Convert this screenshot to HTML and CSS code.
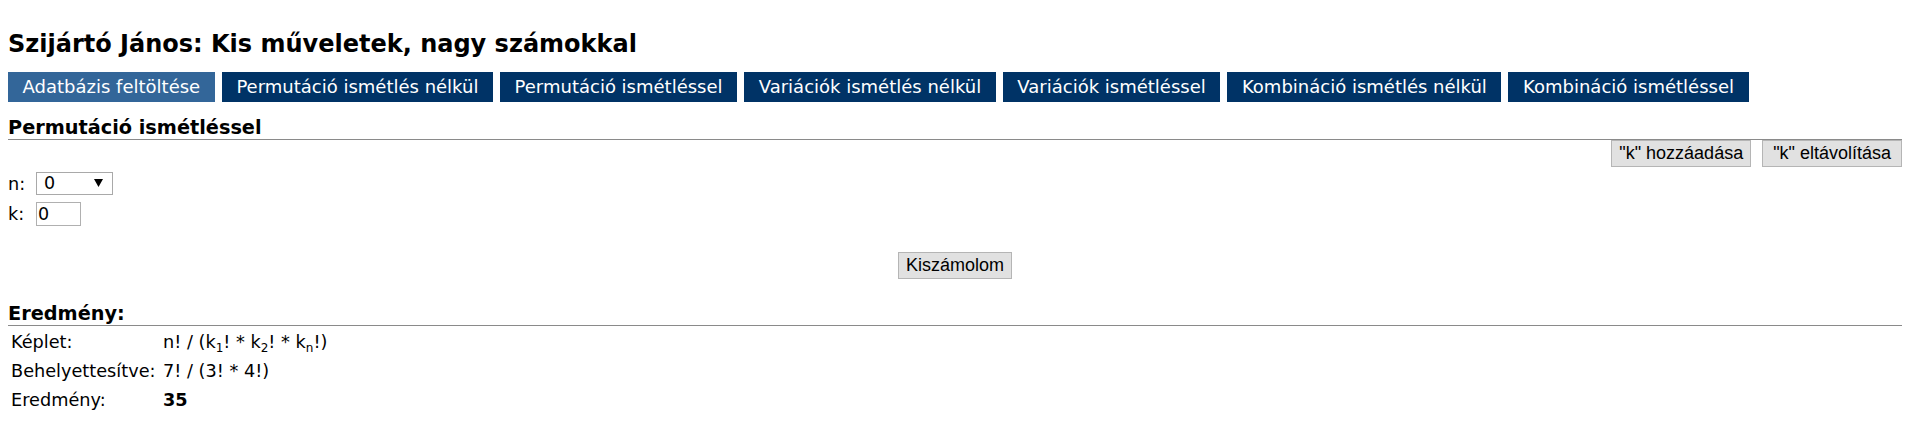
FILE: index.html
```html
<!DOCTYPE html>
<html lang="hu">
<head>
<meta charset="utf-8">
<title>Kis műveletek, nagy számokkal</title>
<link rel="stylesheet" href="styles.css">
</head>
<body>
<div class="page">
  <h1 class="title">Szijártó János: Kis műveletek, nagy számokkal</h1>
  <nav class="tabs">
    <a class="tab tab-active" href="#">Adatbázis feltöltése</a>
    <a class="tab" href="#">Permutáció ismétlés nélkül</a>
    <a class="tab" href="#">Permutáció ismétléssel</a>
    <a class="tab" href="#">Variációk ismétlés nélkül</a>
    <a class="tab" href="#">Variációk ismétléssel</a>
    <a class="tab" href="#">Kombináció ismétlés nélkül</a>
    <a class="tab" href="#">Kombináció ismétléssel</a>
  </nav>
  <h2 class="section">Permutáció ismétléssel</h2>
  <div class="k-actions">
    <button class="btn" type="button">"k" hozzáadása</button>
    <button class="btn btn-wide" type="button">"k" eltávolítása</button>
  </div>
  <div class="field field-n">
    <label class="field-label">n:</label>
    <span class="select-wrap">
      <select class="select"><option>0</option></select>
      <svg class="select-arrow" width="9" height="8" viewBox="0 0 9 8"><polygon points="0,0 9,0 4.5,8" fill="#000"/></svg>
    </span>
  </div>
  <div class="field field-k">
    <label class="field-label">k:</label>
    <input class="input" type="text" value="0">
  </div>
  <div class="calc">
    <button class="btn" type="button">Kiszámolom</button>
  </div>
  <h2 class="section result-title">Eredmény:</h2>
  <table class="result">
    <tr><td class="result-label">Képlet:</td><td>n! / (k<sub>1</sub>! * k<sub>2</sub>! * k<sub>n</sub>!)</td></tr>
    <tr><td class="result-label">Behelyettesítve:</td><td>7! / (3! * 4!)</td></tr>
    <tr><td class="result-label">Eredmény:</td><td><strong>35</strong></td></tr>
  </table>
</div>
</body>
</html>
```

FILE: styles.css
```css
html, body {
  margin: 0;
  padding: 0;
  background: #fff;
}

body {
  font-family: "DejaVu Sans", Verdana, sans-serif;
  font-size: 17.7px;
  color: #000;
}

.page {
  padding: 0 8px 0 8px;
}

.title {
  margin: 30px 0 0 0;
  font-size: 24px;
  line-height: 28px;
  font-weight: bold;
}

.tabs {
  display: flex;
  gap: 7px;
  margin-top: 14px;
}

.tab {
  display: block;
  background: #003366;
  color: #fff;
  text-decoration: none;
  font-size: 18px;
  line-height: 20px;
  padding: 5px 14.6px;
  white-space: nowrap;
}

.tab-active {
  background: #336699;
}

.section {
  margin: 15px 0 0 0;
  font-size: 19.3px;
  line-height: 22px;
  font-weight: bold;
  border-bottom: 1px solid #8a8a8a;
}

.k-actions {
  display: flex;
  justify-content: flex-end;
  gap: 11px;
}

.btn {
  font-family: "Liberation Sans", Arial, sans-serif;
  font-size: 18px;
  height: 27px;
  line-height: 23px;
  padding: 0 7px;
  margin: 0;
  background: #e1e1e1;
  border: 1px solid #b5b5b5;
  border-radius: 0;
  color: #000;
  cursor: pointer;
}

.btn-wide {
  padding: 0 10px;
}

.field {
  display: flex;
  align-items: center;
}

.field-n {
  margin-top: 5px;
}

.field-k {
  margin-top: 7px;
}

.field-label {
  width: 28px;
  line-height: 20px;
}

.select-wrap {
  position: relative;
  display: block;
}

.select {
  appearance: none;
  -webkit-appearance: none;
  display: block;
  width: 77px;
  height: 23px;
  margin: 0;
  padding: 0 0 0 7px;
  border: 1px solid #a9a9a9;
  border-radius: 0;
  background: #fff;
  font-family: "DejaVu Sans", Verdana, sans-serif;
  font-size: 17.5px;
  line-height: 21px;
  color: #000;
}

.select-arrow {
  position: absolute;
  right: 10px;
  top: 7px;
  pointer-events: none;
}

.input {
  display: block;
  box-sizing: border-box;
  width: 45px;
  height: 24px;
  margin: 0;
  padding: 0 0 0 1px;
  border: 1px solid #b0b0b0;
  border-radius: 0;
  font-family: "DejaVu Sans", Verdana, sans-serif;
  font-size: 17.5px;
  color: #000;
}

.calc {
  display: flex;
  justify-content: center;
  margin-top: 26px;
}

.result-title {
  margin-top: 24px;
}

.result {
  margin-top: 1px;
  border-spacing: 2px;
}

.result td {
  padding: 1px;
  line-height: 25px;
  vertical-align: middle;
}

.result .result-label {
  width: 148px;
}

.result sub {
  font-size: 12px;
  line-height: 0;
  vertical-align: -4px;
}

.result strong {
  font-weight: bold;
}
```
